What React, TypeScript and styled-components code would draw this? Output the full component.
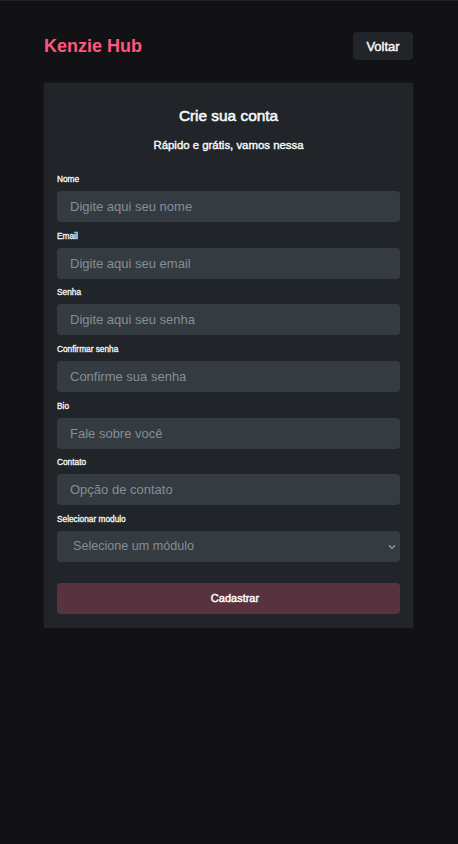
import React from "react";
import styled, { createGlobalStyle } from "styled-components";

const GlobalStyle = createGlobalStyle`
  * { box-sizing: border-box; }
  html, body { margin: 0; padding: 0; background: #121214; }
  body { font-family: "Liberation Sans", Arial, sans-serif; color: #f8f9fa; }
`;

const Page = styled.div`
  min-height: 844px;
  border-top: 1px solid #212124;
  display: flex;
  flex-direction: column;
  align-items: flex-start;
  padding: 31px 44px 40px;
`;

const Header = styled.header`
  width: 369px;
  display: flex;
  align-items: center;
  justify-content: space-between;
`;

const Logo = styled.h1`
  margin: 0;
  font-size: 18px;
  font-weight: 700;
  color: #ff577f;
`;

const BackButton = styled.button`
  width: 60px;
  height: 28px;
  border: none;
  border-radius: 4px;
  background: #212529;
  color: #f8f9fa;
  font-family: inherit;
  font-size: 13px;
  font-weight: 400;
  -webkit-text-stroke: 0.45px #f8f9fa;
  cursor: pointer;
`;

const Card = styled.form`
  width: 369px;
  margin-top: 23px;
  background: #212529;
  box-shadow: 0 0 0 1px rgba(255, 255, 255, 0.02);
  padding: 24px 13px 14px;
  display: flex;
  flex-direction: column;
`;

const Title = styled.h2`
  margin: 0;
  text-align: center;
  font-size: 15.4px;
  line-height: 18px;
  font-weight: 400;
  -webkit-text-stroke: 0.55px #f8f9fa;
`;

const Subtitle = styled.p`
  margin: 14px 0 0;
  text-align: center;
  font-size: 11.4px;
  line-height: 13px;
  font-weight: 400;
  -webkit-text-stroke: 0.4px #f8f9fa;
`;

const Fields = styled.div`
  margin-top: 22px;
  display: flex;
  flex-direction: column;
  gap: 8.67px;
`;

const Field = styled.div`
  display: flex;
  flex-direction: column;
  gap: 7px;
`;

const Label = styled.label`
  font-size: 8.3px;
  font-weight: 400;
  line-height: 10px;
  color: #f8f9fa;
  -webkit-text-stroke: 0.3px #f8f9fa;
`;

const Input = styled.input`
  width: 100%;
  height: 31px;
  border: none;
  border-radius: 4px;
  background: #343b41;
  font-family: "Liberation Sans", Arial, sans-serif;
  font-size: 13px;
  outline: none;
  padding: 0 13px;
  color: #f8f9fa;
  &::placeholder { color: #868e96; }
`;

const SelectWrap = styled.div`
  position: relative;
`;

const Select = styled.select`
  width: 100%;
  height: 31px;
  border: none;
  border-radius: 4px;
  background: #343b41;
  font-family: "Liberation Sans", Arial, sans-serif;
  font-size: 12.6px;
  outline: none;
  appearance: none;
  padding: 0 16px;
  color: #868e96;
`;

const Chevron = styled.svg`
  position: absolute;
  right: 4px;
  top: 13px;
  pointer-events: none;
`;

const Submit = styled.button`
  margin-top: 21px;
  height: 31px;
  border: none;
  border-radius: 4px;
  padding: 0 0 0 13px;
  background: #59323f;
  color: #ffffff;
  font-family: inherit;
  font-size: 11px;
  font-weight: 400;
  -webkit-text-stroke: 0.4px #ffffff;
`;

const fields = [
  { label: "Nome", placeholder: "Digite aqui seu nome", type: "text" },
  { label: "Email", placeholder: "Digite aqui seu email", type: "email" },
  { label: "Senha", placeholder: "Digite aqui seu senha", type: "password" },
  { label: "Confirmar senha", placeholder: "Confirme sua senha", type: "password" },
  { label: "Bio", placeholder: "Fale sobre você", type: "text" },
  { label: "Contato", placeholder: "Opção de contato", type: "text" },
];

export default function App() {
  return (
    <>
      <GlobalStyle />
      <Page>
        <Header>
          <Logo>Kenzie Hub</Logo>
          <BackButton type="button">Voltar</BackButton>
        </Header>
        <Card onSubmit={(e) => e.preventDefault()}>
          <Title>Crie sua conta</Title>
          <Subtitle>Rápido e grátis, vamos nessa</Subtitle>
          <Fields>
            {fields.map((f) => (
              <Field key={f.label}>
                <Label>{f.label}</Label>
                <Input type={f.type} placeholder={f.placeholder} />
              </Field>
            ))}
            <Field>
              <Label>Selecionar modulo</Label>
              <SelectWrap>
                <Select defaultValue="">
                  <option value="" disabled>
                    Selecione um módulo
                  </option>
                </Select>
                <Chevron width="8" height="6" viewBox="0 0 8 6">
                  <path d="M1 1.2 L4 4.4 L7 1.2" fill="none" stroke="#868e96" strokeWidth="1.6" />
                </Chevron>
              </SelectWrap>
            </Field>
          </Fields>
          <Submit type="submit">Cadastrar</Submit>
        </Card>
      </Page>
    </>
  );
}
